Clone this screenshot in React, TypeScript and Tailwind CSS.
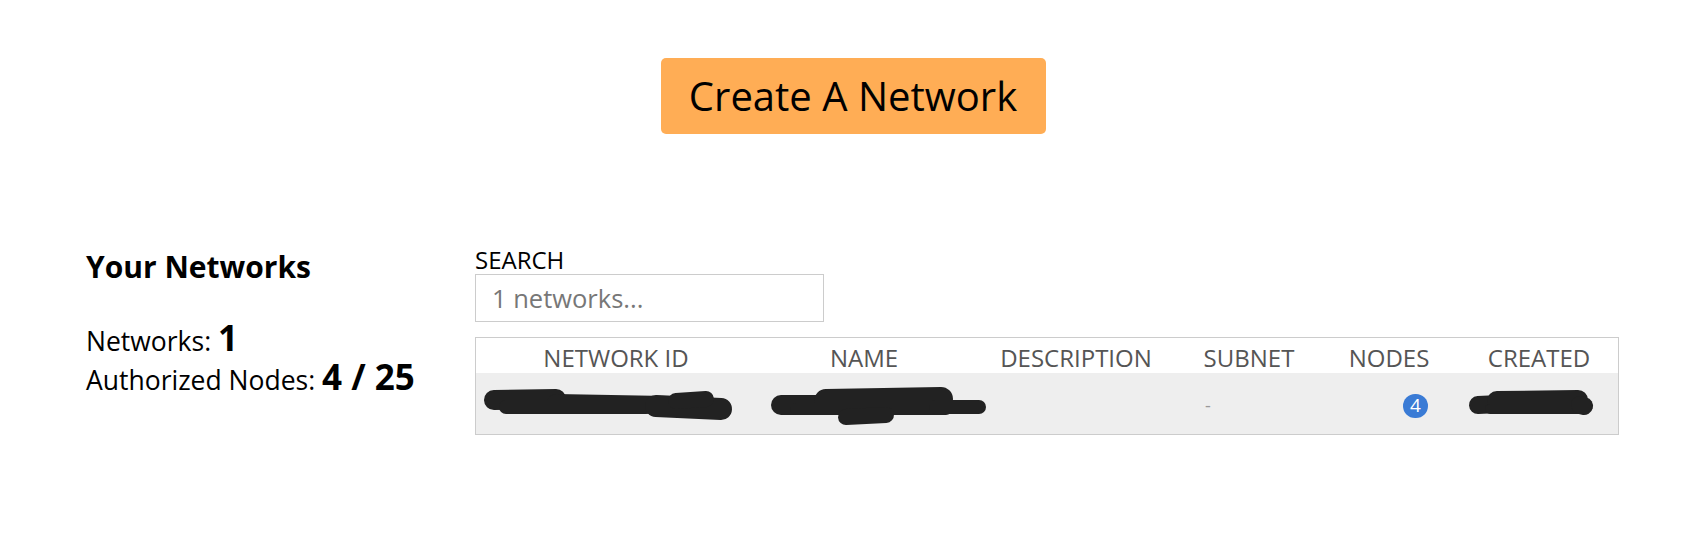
import React from "react";

type P = { d: string; sw: number };

const scribbles: P[] = [
  // network id
  { d: "M494 401 L556 400", sw: 20 },
  { d: "M556 404 L666 406", sw: 18 },
  { d: "M506 408 L646 408", sw: 14 },
  { d: "M656 407 L721 410", sw: 22 },
  { d: "M676 402 L706 400", sw: 16 },
  // name
  { d: "M781 406 L821 406", sw: 20 },
  { d: "M826 402 L941 400", sw: 24 },
  { d: "M796 410 L946 410", sw: 12 },
  { d: "M846 418 L886 416", sw: 16 },
  { d: "M936 408 L979 408", sw: 14 },
  // created
  { d: "M1478 406 L1500 405", sw: 18 },
  { d: "M1497 402 L1578 401", sw: 20 },
  { d: "M1490 410 L1582 410", sw: 10 },
  { d: "M1580 406 L1584 407", sw: 18 },
];

export default function App() {
  return (
    <div className="w-[1692px] h-[535px] bg-white text-black font-['Open_Sans',sans-serif] overflow-hidden">
      <div className="pt-[58px] flex justify-center pl-[14px]">
        <button className="w-[385px] h-[76px] bg-[#ffad55] rounded-[5px] text-[40px] leading-none text-black">
          Create A Network
        </button>
      </div>

      <div className="mt-[111px] flex pl-[86px]">
        <div className="w-[389px] shrink-0">
          <h3 className="text-[30px] font-bold leading-[40px] mt-[2px]">Your Networks</h3>
          <div className="mt-[33px] text-[26.5px] leading-[36px]">
            <div>
              Networks: <span className="font-bold text-[35px] leading-none">1</span>
            </div>
            <div>
              Authorized Nodes: <span className="font-bold text-[35px] leading-none">4 / 25</span>
            </div>
          </div>
        </div>

        <div className="w-[1144px] shrink-0">
          <div className="text-[24px] leading-[28px] mt-[1px]">SEARCH</div>
          <div className="w-[349px] h-[48px] border border-[#cccccc] flex items-center pl-[16px] text-[25.5px] text-[#777]">
            1 networks...
          </div>
          <div className="mt-[15px] border border-[#cccccc]">
            <div className="grid grid-cols-[280px_216px_208px_138px_142px_1fr] h-[35px] pt-[2px] items-center text-[24px] text-[#555] bg-white">
              <div className="text-center">NETWORK ID</div>
              <div className="text-center">NAME</div>
              <div className="text-center">DESCRIPTION</div>
              <div className="text-center">SUBNET</div>
              <div className="text-center">NODES</div>
              <div className="text-center">CREATED</div>
            </div>
            <div className="relative grid grid-cols-[280px_216px_208px_138px_142px_1fr] h-[61px] items-center bg-[#eeeeee]">
              <div />
              <div />
              <div />
              <div className="self-start pt-[23px] pl-[25px] text-[18px] leading-none text-[#999]">-</div>
              <div className="flex justify-end pr-[32px]">
                <span className="mt-[4px] w-[25px] h-[24px] rounded-full bg-[#3a7bd5] text-white text-[19px] leading-none flex items-center justify-center">
                  4
                </span>
              </div>
              <div />
              <svg className="absolute left-0 top-0" width={1142} height={61} viewBox="476 374 1142 61">
                {scribbles.map((p, i) => (
                  <path
                    key={i}
                    d={p.d}
                    stroke="#222"
                    strokeWidth={p.sw}
                    strokeLinecap="round"
                    strokeLinejoin="round"
                    fill="none"
                  />
                ))}
              </svg>
            </div>
          </div>
        </div>
      </div>
    </div>
  );
}
